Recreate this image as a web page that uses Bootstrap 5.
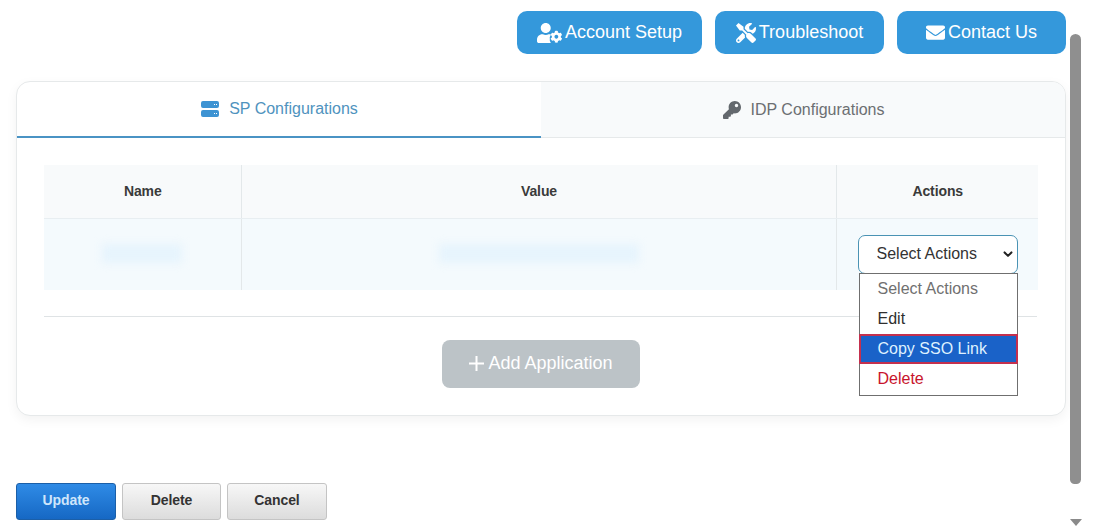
<!DOCTYPE html>
<html lang="en">
<head>
<meta charset="utf-8">
<title>SSO Configurations</title>
<link rel="stylesheet" href="https://cdn.jsdelivr.net/npm/bootstrap@5.3.0/dist/css/bootstrap.min.css">
<style>
html,body{height:526px;overflow:hidden;background:#fff}
body{font-family:"Liberation Sans",Arial,sans-serif;color:#333;position:relative}
.page-wrap{padding:11px 35px 0 16px}
.top-btn{background:#3498db;border:0;color:#fff;border-radius:10px;height:43px;font-size:18px;font-family:inherit;display:flex;align-items:center;justify-content:center;gap:3px;padding:0}
.top-btn:hover{background:#3498db;color:#fff}
.w-acct{width:185px}.w-trbl{width:169px}.w-cont{width:169px}
.top-btn svg{fill:#fff;display:block}
.top-gap{gap:13px}
.cfg-box{margin-top:27px;height:335px;border:1px solid #e6e9ea;border-radius:14px;box-shadow:0 4px 12px rgba(0,0,0,.05);background:#fff;overflow:hidden}
.tab-item{flex:1 1 50%;height:56px;display:flex;align-items:center;justify-content:center;font-size:16px}
.tab-on{color:#4f93be;border-bottom:2px solid #4a93c4;gap:10px;padding:0 0 1px 1px}
.tab-off{color:#6c6f72;background:#f8fafb;border-bottom:1px solid #e6e9ea;gap:10px;padding-left:1px}
.tab-on svg{fill:#3d93d3}.tab-off svg{fill:#63686d}
.box-body{padding:27px 27px 0}
.cfg-table{table-layout:fixed;width:994px;margin:0;border-collapse:collapse;font-size:14px}
.cfg-table th{background:#f8fafb;height:53px;text-align:center;vertical-align:middle;font-weight:700;color:#3a3a3a;border-bottom:1px solid #e8eef1;padding:0 0 0 1px;letter-spacing:-.1px}
.cfg-table td{background:#f4fafd;height:72px;text-align:center;vertical-align:middle;padding:0;border:0}
.cfg-table th+th,.cfg-table td+td{border-left:1px solid #e3e8ea}
.col-a{width:197px}.col-b{width:595px}.col-c{width:202px}
.redact{display:inline-block;height:19px;background:#e6f4fd;filter:blur(4px);vertical-align:middle;margin-top:-3px}
.redact-a{width:80px}.redact-b{width:200px}
.act-cell{position:relative}
.act-select{width:160px;height:39px;font-size:16px;font-family:inherit;color:#333;border:1px solid #4a93b4;border-radius:7px;padding:0 0 0 18px;background-color:#fff;background-position:right 2px center;background-size:14px 11px;background-image:url("data:image/svg+xml,%3csvg xmlns='http://www.w3.org/2000/svg' viewBox='0 0 16 16'%3e%3cpath fill='none' stroke='%23222' stroke-linecap='round' stroke-linejoin='round' stroke-width='3' d='m3 5 5 5 5-5'/%3e%3c/svg%3e");margin:0 0 0 21px}
.act-menu{position:absolute;left:22px;top:54px;width:159px;background:#fff;border:1px solid #6f6f6f;font-size:16px;text-align:left;padding:0;z-index:3}
.act-opt{height:30px;line-height:30px;padding-left:18px;color:#2f2f2f}
.opt-muted{color:#707070}
.opt-hl{background:#1a62c8;color:#dff1ff;box-shadow:0 0 0 2px #c4304e inset;margin:0 -1px 0 -1px;padding-left:19px;line-height:29px}
.opt-red{color:#c8142c;height:31px}
.sep-line{margin:26px 0 0;border:0;border-top:1px solid #dfe3e5;opacity:1;width:993px}
.add-btn{margin-top:23px;width:198px;height:48px;background:#bcc3c7;border:0;border-radius:8px;color:#fff;font-size:18px;font-family:inherit;display:flex;align-items:center;justify-content:center;gap:4px;padding:0 0 2px}
.add-btn svg{stroke:#fff;stroke-width:2;display:block}
.foot-row{margin-top:67px;gap:6px}
.foot-btn{height:37px;border-radius:3px;font-size:14px;letter-spacing:-.1px;font-weight:700;font-family:inherit;padding:0 0 2px;width:99px;color:#333;border:1px solid #c4c4c4;background:linear-gradient(#f7f7f7,#dcdcdc)}
.foot-pri{width:100px;color:#cfe6fb;border:1px solid #1b5fa8;background:linear-gradient(#2f8be6,#1668c4)}
.foot-wide{width:100px}
.bar-thumb{position:absolute;left:1070px;top:34px;width:11px;height:450px;background:#8f8f8f;border-radius:6px 6px 5px 5px}
.bar-arrow{position:absolute;left:1070px;top:519px;width:0;height:0;border-left:6px solid transparent;border-right:6px solid transparent;border-top:7px solid #8a8a8a}
</style>
</head>
<body>
<div class="page-wrap">
  <div class="d-flex justify-content-end top-gap">
    <button type="button" class="btn top-btn w-acct">
      <svg width="25" height="20" viewBox="0 0 640 512"><path d="M610.5 373.3c2.6-14.1 2.6-28.5 0-42.6l25.8-14.9c3-1.7 4.3-5.2 3.3-8.5-6.7-21.6-18.2-41.2-33.2-57.4-2.3-2.5-6-3.1-9-1.4l-25.8 14.9c-10.9-9.3-23.4-16.5-36.9-21.3v-29.8c0-3.4-2.4-6.4-5.7-7.1-22.3-5-45-4.8-66.2 0-3.3.7-5.7 3.7-5.7 7.1v29.8c-13.5 4.8-26 12-36.9 21.3l-25.8-14.9c-2.9-1.7-6.7-1.1-9 1.4-15 16.2-26.5 35.8-33.2 57.4-1 3.3.4 6.8 3.3 8.5l25.8 14.9c-2.6 14.1-2.6 28.5 0 42.6l-25.8 14.9c-3 1.7-4.3 5.2-3.3 8.5 6.7 21.6 18.2 41.1 33.2 57.4 2.3 2.5 6 3.1 9 1.4l25.8-14.9c10.9 9.3 23.4 16.5 36.9 21.3v29.8c0 3.4 2.4 6.4 5.7 7.1 22.3 5 45 4.8 66.2 0 3.3-.7 5.7-3.7 5.7-7.1v-29.8c13.5-4.8 26-12 36.9-21.3l25.8 14.9c2.9 1.7 6.7 1.1 9-1.4 15-16.2 26.5-35.8 33.2-57.4 1-3.3-.4-6.8-3.3-8.5l-25.8-14.9zM496 400.5c-26.8 0-48.5-21.8-48.5-48.5s21.8-48.5 48.5-48.5 48.5 21.8 48.5 48.5-21.7 48.5-48.5 48.5zM224 256c70.7 0 128-57.3 128-128S294.7 0 224 0 96 57.3 96 128s57.3 128 128 128zM134 288h17c22 10 46 16 73 16s51-6 73-16h17c15 0 30 2 44 7-20 30-34 70-34 100l24 14-24 14c0 25 15 60 30 89H48c-26 0-48-22-48-48v-42c0-74 60-134 134-134z"/></svg>
      <span>Account Setup</span>
    </button>
    <button type="button" class="btn top-btn w-trbl">
      <svg width="20" height="20" viewBox="0 0 512 512"><path d="M501.1 395.7L384 278.6c-23.1-23.1-57.6-27.6-85.4-13.9L192 158.1V96L64 0 0 64l96 128h62.1l106.6 106.6c-13.6 27.8-9.2 62.3 13.9 85.4l117.1 117.1c14.6 14.6 38.2 14.6 52.7 0l52.7-52.7c14.5-14.6 14.5-38.2 0-52.7zM331.7 225c28.3 0 54.9 11 74.9 31l19.4 19.4c15.8-6.9 30.8-16.5 43.8-29.5 37.1-37.1 49.7-89.3 37.9-136.7-2.2-9-13.5-12.1-20.1-5.5l-74.4 74.4-67.9-11.3L334 98.9l74.4-74.4c6.6-6.6 3.4-17.9-5.7-20.2-47.4-11.7-99.6.9-136.6 37.9-28.5 28.5-41.9 66.1-41.2 103.6l82.1 82.1c8.1-1.9 16.5-2.9 24.7-2.9zm-103.9 82l-56.7-56.7L18.7 402.8c-25 25-25 65.5 0 90.5s65.5 25 90.5 0l123.6-123.6c-7.6-19.9-9.9-41.6-5-62.7zM64 472c-13.2 0-24-10.8-24-24 0-13.3 10.7-24 24-24s24 10.7 24 24c0 13.2-10.7 24-24 24z"/></svg>
      <span>Troubleshoot</span>
    </button>
    <button type="button" class="btn top-btn w-cont">
      <svg width="19" height="19" viewBox="0 0 512 512"><path d="M502.3 190.8c3.9-3.1 9.7-.2 9.7 4.7V400c0 26.5-21.5 48-48 48H48c-26.5 0-48-21.5-48-48V195.6c0-5 5.7-7.8 9.7-4.7 22.4 17.4 52.1 39.5 154.1 113.6 21.1 15.4 56.7 47.8 92.2 47.6 35.7.3 72-32.8 92.3-47.6 102-74.1 131.6-96.3 154-113.7zM256 320c23.2.4 56.6-29.2 73.4-41.4 132.7-96.3 142.8-104.7 173.4-128.7 5.8-4.5 9.2-11.5 9.2-18.9v-19c0-26.5-21.5-48-48-48H48C21.5 64 0 85.5 0 112v19c0 7.4 3.4 14.3 9.2 18.9 30.6 23.9 40.7 32.4 173.4 128.7 16.8 12.2 50.2 41.8 73.4 41.4z"/></svg>
      <span>Contact Us</span>
    </button>
  </div>

  <div class="cfg-box">
    <div class="d-flex">
      <div class="tab-item tab-on">
        <svg width="18" height="16" viewBox="0 0 18 16"><path fill-rule="evenodd" d="M2 0h14a2 2 0 0 1 2 2v3a2 2 0 0 1-2 2H2a2 2 0 0 1-2-2V2a2 2 0 0 1 2-2zm11 3v1h1V3zm2 0v1h1V3zM2 9h14a2 2 0 0 1 2 2v3a2 2 0 0 1-2 2H2a2 2 0 0 1-2-2v-3a2 2 0 0 1 2-2zm11 3v1h1v-1zm2 0v1h1v-1z"/></svg>
        <span>SP Configurations</span>
      </div>
      <div class="tab-item tab-off">
        <svg width="18" height="18" viewBox="0 0 512 512"><path d="M512 176.001C512 273.203 433.202 352 336 352c-11.22 0-22.19-1.062-32.827-3.069l-24.012 27.014A23.999 23.999 0 0 1 261.223 384H224v40c0 13.255-10.745 24-24 24h-40v40c0 13.255-10.745 24-24 24H24c-13.255 0-24-10.745-24-24v-78.059c0-6.365 2.529-12.47 7.029-16.971l161.802-161.802C163.108 213.814 160 195.271 160 176 160 78.798 238.797.001 335.999 0 433.488-.001 512 78.511 512 176.001zM336 128c0 26.51 21.49 48 48 48s48-21.49 48-48-21.49-48-48-48-48 21.49-48 48z"/></svg>
        <span>IDP Configurations</span>
      </div>
    </div>
    <div class="box-body">
      <table class="cfg-table">
        <colgroup><col class="col-a"><col class="col-b"><col class="col-c"></colgroup>
        <thead><tr><th>Name</th><th>Value</th><th>Actions</th></tr></thead>
        <tbody><tr>
          <td><span class="redact redact-a"></span></td>
          <td><span class="redact redact-b"></span></td>
          <td class="act-cell">
            <select class="form-select act-select" aria-label="Select Actions"><option>Select Actions</option><option>Edit</option><option>Copy SSO Link</option><option>Delete</option></select>
            <div class="act-menu">
              <div class="act-opt opt-muted">Select Actions</div>
              <div class="act-opt">Edit</div>
              <div class="act-opt opt-hl">Copy SSO Link</div>
              <div class="act-opt opt-red">Delete</div>
            </div>
          </td>
        </tr></tbody>
      </table>
      <hr class="sep-line">
      <div class="d-flex justify-content-center">
        <button type="button" class="btn add-btn">
          <svg width="15" height="15" viewBox="0 0 15 15"><path d="M7.5 0v15M0 7.5h15"/></svg>
          <span>Add Application</span>
        </button>
      </div>
    </div>
  </div>

  <div class="d-flex foot-row">
    <button type="button" class="btn foot-btn foot-pri">Update</button>
    <button type="button" class="btn foot-btn">Delete</button>
    <button type="button" class="btn foot-btn foot-wide">Cancel</button>
  </div>
</div>
<div class="bar-thumb"></div>
<div class="bar-arrow"></div>
<script src="https://cdn.jsdelivr.net/npm/bootstrap@5.3.0/dist/js/bootstrap.bundle.min.js"></script>
</body>
</html>
